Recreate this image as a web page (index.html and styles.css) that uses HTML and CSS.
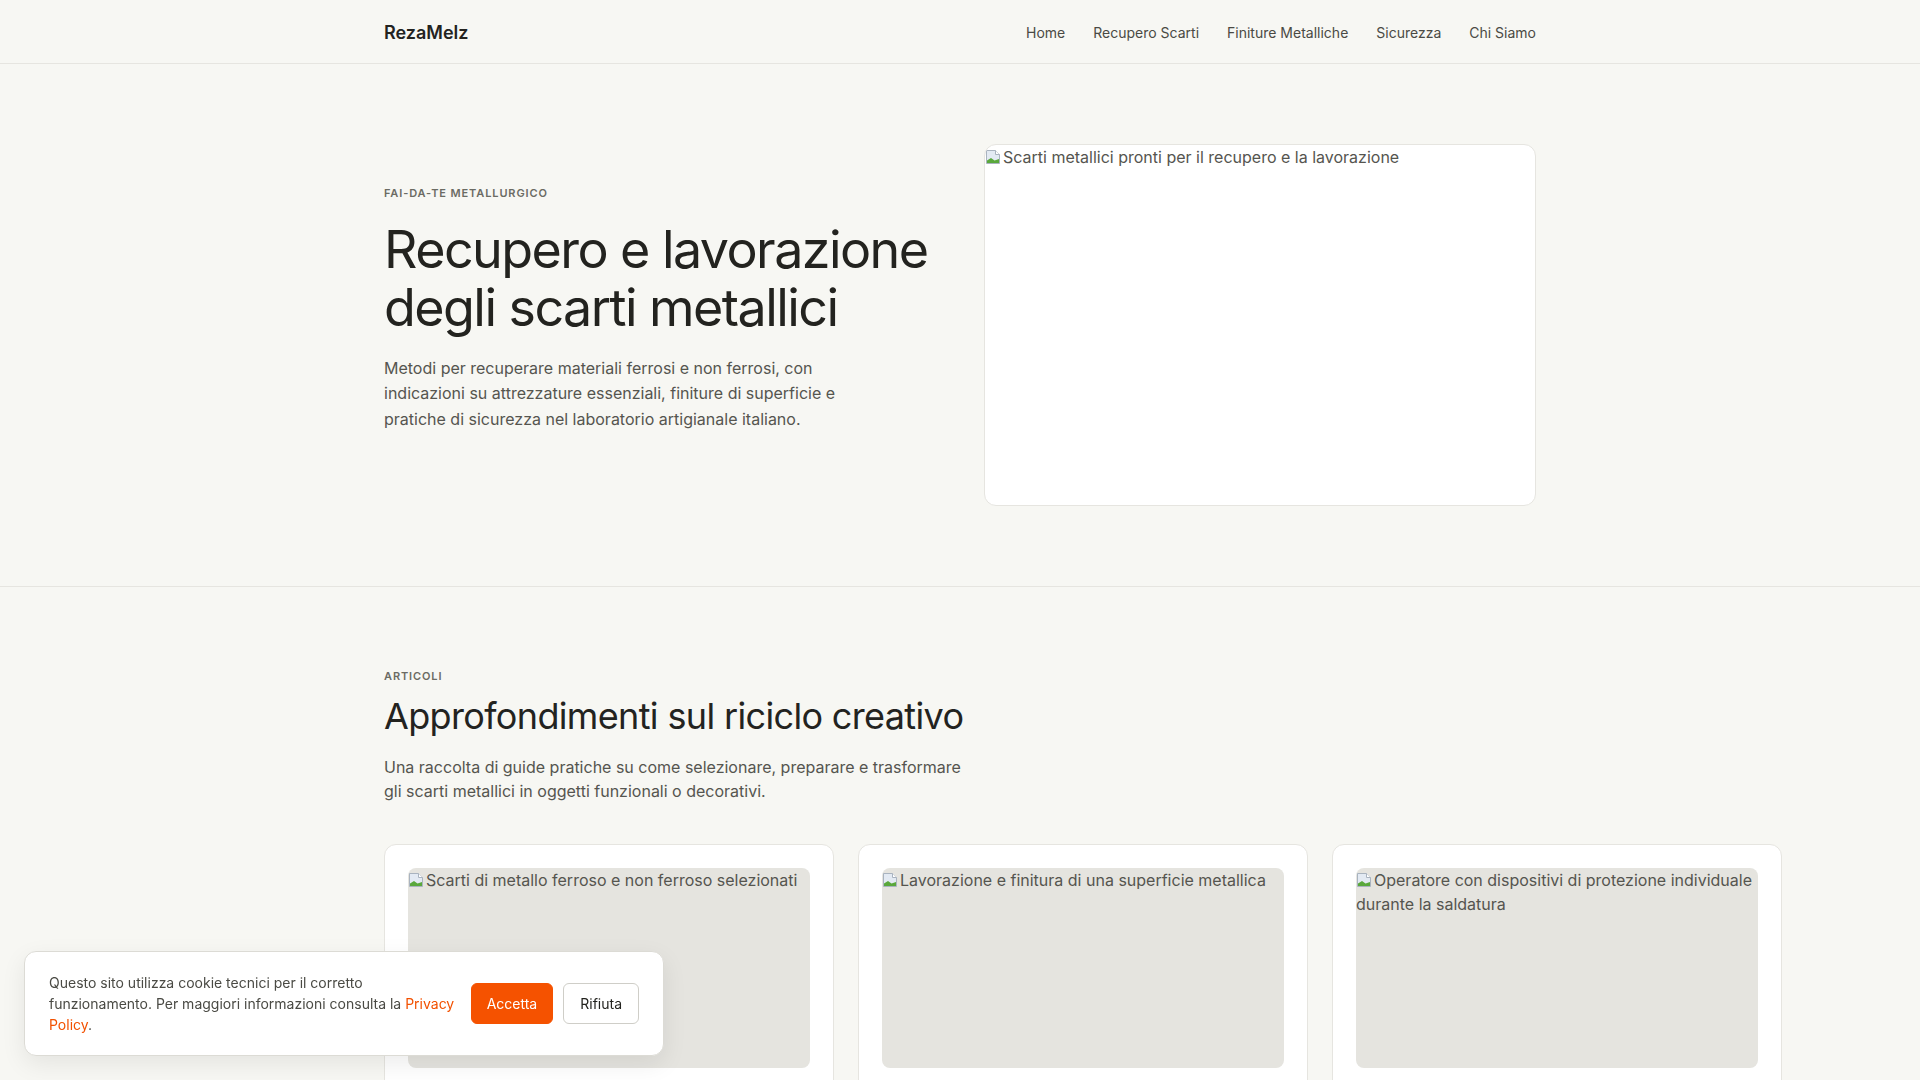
FILE: index.html
```html
<!DOCTYPE html>
<html lang="it">
<head>
    <meta charset="UTF-8">
    <meta name="viewport" content="width=device-width, initial-scale=1.0">
    <title>RezaMelz - Recupero e lavorazione degli scarti metallici</title>
    <link rel="stylesheet" href="styles.css">
</head>
<body>
    <header class="site-header">
        <div class="container header-inner">
            <a class="brand" href="#">RezaMelz</a>
            <nav class="main-nav">
                <a href="#">Home</a>
                <a href="#">Recupero Scarti</a>
                <a href="#">Finiture Metalliche</a>
                <a href="#">Sicurezza</a>
                <a href="#">Chi Siamo</a>
            </nav>
        </div>
    </header>

    <section class="hero">
        <div class="container hero-grid">
            <div class="hero-text">
                <p class="eyebrow">Fai-da-te metallurgico</p>
                <h1>Recupero e lavorazione degli scarti metallici</h1>
                <p class="lead">Metodi per recuperare materiali ferrosi e non ferrosi, con indicazioni su attrezzature essenziali, finiture di superficie e pratiche di sicurezza nel laboratorio artigianale italiano.</p>
            </div>
            <div class="hero-media">
                <span class="alt-text"><svg class="broken" viewBox="0 0 16 16" width="16" height="16"><path d="M1.5 1.5h9l4 4v9h-13z" fill="#e3eaf3" stroke="#a9b3bf"/><path d="M10.5 1.5v4h4" fill="#fff" stroke="#a9b3bf"/><path d="M2 14v-2.5l4-2.5 3.5 2.5 4.5-1.5v4z" fill="#5aa83c"/></svg>Scarti metallici pronti per il recupero e la lavorazione</span>
            </div>
        </div>
    </section>

    <section class="articles">
        <div class="container">
            <p class="eyebrow">Articoli</p>
            <h2>Approfondimenti sul riciclo creativo</h2>
            <p class="section-intro">Una raccolta di guide pratiche su come selezionare, preparare e trasformare gli scarti metallici in oggetti funzionali o decorativi.</p>

            <div class="card-grid">
                <article class="card">
                    <div class="card-media">
                        <span class="alt-text"><svg class="broken" viewBox="0 0 16 16" width="16" height="16"><path d="M1.5 1.5h9l4 4v9h-13z" fill="#e3eaf3" stroke="#a9b3bf"/><path d="M10.5 1.5v4h4" fill="#fff" stroke="#a9b3bf"/><path d="M2 14v-2.5l4-2.5 3.5 2.5 4.5-1.5v4z" fill="#5aa83c"/></svg>Scarti di metallo ferroso e non ferroso selezionati</span>
                    </div>
                    <h3>Selezione degli scarti</h3>
                    <p>Come distinguere i metalli e preparare il materiale per il riuso.</p>
                </article>
                <article class="card">
                    <div class="card-media">
                        <span class="alt-text"><svg class="broken" viewBox="0 0 16 16" width="16" height="16"><path d="M1.5 1.5h9l4 4v9h-13z" fill="#e3eaf3" stroke="#a9b3bf"/><path d="M10.5 1.5v4h4" fill="#fff" stroke="#a9b3bf"/><path d="M2 14v-2.5l4-2.5 3.5 2.5 4.5-1.5v4z" fill="#5aa83c"/></svg>Lavorazione e finitura di una superficie metallica</span>
                    </div>
                    <h3>Finiture metalliche</h3>
                    <p>Levigatura, spazzolatura e protezione delle superfici.</p>
                </article>
                <article class="card">
                    <div class="card-media">
                        <span class="alt-text"><svg class="broken" viewBox="0 0 16 16" width="16" height="16"><path d="M1.5 1.5h9l4 4v9h-13z" fill="#e3eaf3" stroke="#a9b3bf"/><path d="M10.5 1.5v4h4" fill="#fff" stroke="#a9b3bf"/><path d="M2 14v-2.5l4-2.5 3.5 2.5 4.5-1.5v4z" fill="#5aa83c"/></svg>Operatore con dispositivi di protezione individuale durante la saldatura</span>
                    </div>
                    <h3>Sicurezza in laboratorio</h3>
                    <p>Dispositivi di protezione e buone pratiche durante la saldatura.</p>
                </article>
            </div>
        </div>
    </section>

    <div class="cookie-banner">
        <p>Questo sito utilizza cookie tecnici per il corretto funzionamento. Per maggiori informazioni consulta la <a href="#">Privacy Policy</a>.</p>
        <div class="cookie-actions">
            <button class="btn btn-accept">Accetta</button>
            <button class="btn btn-reject">Rifiuta</button>
        </div>
    </div>
</body>
</html>
```

FILE: styles.css
```css
* {
    box-sizing: border-box;
}
body {
    margin: 0;
    font-family: Inter, "Noto Sans", Arial, sans-serif;
    background-color: #f7f7f3;
    color: #23231f;
}
.container {
    width: 1152px;
    margin: 0 auto;
}

/* header */
.site-header {
    border-bottom: 1px solid #e6e5e0;
}
.header-inner {
    height: 63px;
    padding-top: 2px;
    display: flex;
    align-items: center;
    justify-content: space-between;
}
.brand {
    font-size: 18px;
    font-weight: 600;
    color: #23231f;
    text-decoration: none;
}
.main-nav {
    display: flex;
    gap: 28px;
}
.main-nav a {
    font-size: 14px;
    color: #4a4a44;
    text-decoration: none;
}

/* hero */
.hero {
    padding: 80px 0;
    border-bottom: 1px solid #e6e5e0;
}
.hero-grid {
    display: grid;
    grid-template-columns: 1fr 1fr;
    gap: 48px;
    align-items: center;
}
.hero-text {
    padding-bottom: 32px;
}
.eyebrow {
    margin: 0;
    font-size: 11px;
    line-height: 16px;
    font-weight: 600;
    letter-spacing: 0.08em;
    text-transform: uppercase;
    color: #6b6b63;
}
.hero h1 {
    margin: 20px 0 20px;
    font-size: 52px;
    line-height: 1.1;
    font-weight: 400;
    letter-spacing: -0.03em;
}
.lead {
    margin: 0;
    max-width: 480px;
    font-size: 16px;
    line-height: 1.6;
    color: #55554f;
}
.hero-media {
    height: 362px;
    background-color: #fff;
    border: 1px solid #e6e5e0;
    border-radius: 12px;
    overflow: hidden;
}
.alt-text {
    font-size: 16px;
    line-height: 24px;
    color: #55554f;
}
.broken {
    vertical-align: -2px;
    margin-right: 2px;
}

/* articles */
.articles {
    padding: 81px 0 80px;
}
.articles h2 {
    margin: 12px 0 18px;
    font-size: 36px;
    line-height: 1.15;
    font-weight: 400;
    letter-spacing: -0.018em;
}
.section-intro {
    margin: 0 0 41px;
    max-width: 590px;
    font-size: 16px;
    line-height: 24px;
    color: #55554f;
}
.card-grid {
    display: grid;
    grid-template-columns: repeat(3, 450px);
    gap: 24px;
}
.card {
    background-color: #fff;
    border: 1px solid #e6e5e0;
    border-radius: 12px;
    padding: 23px;
}
.card-media {
    height: 200px;
    background-color: #e5e4df;
    border-radius: 8px;
    overflow: hidden;
}
.card h3 {
    margin: 20px 0 8px;
    font-size: 20px;
    font-weight: 500;
}
.card p {
    margin: 0;
    font-size: 15px;
    line-height: 1.6;
    color: #55554f;
}

/* cookie banner */
.cookie-banner {
    position: fixed;
    left: 24px;
    bottom: 24px;
    width: 640px;
    display: flex;
    align-items: center;
    gap: 16px;
    padding: 20px 24px;
    background-color: #fff;
    border: 1px solid #dcdbd5;
    border-radius: 12px;
    box-shadow: 0 8px 24px rgba(0, 0, 0, 0.08);
}
.cookie-banner p {
    flex: 1;
    margin: 0;
    font-size: 14px;
    line-height: 21px;
    color: #4a4a44;
}
.cookie-banner a {
    color: #f25100;
    text-decoration: none;
}
.cookie-actions {
    display: flex;
    gap: 10px;
}
.btn {
    font-family: inherit;
    font-size: 14px;
    line-height: 21px;
    padding: 9px 15px;
    border-radius: 6px;
    cursor: pointer;
}
.btn-accept {
    background-color: #f55200;
    border: 1px solid #f55200;
    color: #fff;
}
.btn-reject {
    padding: 9px 16px;
    background-color: #fff;
    border: 1px solid #cfcec8;
    color: #23231f;
}
```
